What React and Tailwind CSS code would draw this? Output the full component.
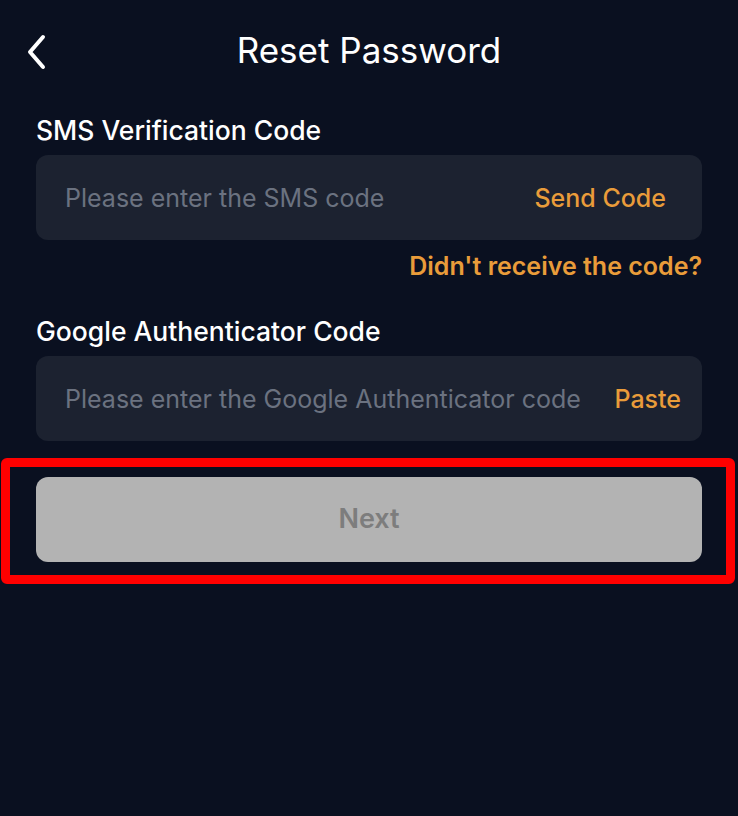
import React, { useState } from "react";

function ChevronLeft() {
  return (
    <svg width="22" height="36" viewBox="0 0 22 36" fill="none" aria-hidden>
      <path
        d="M18 3 L5 18 L18 33"
        stroke="white"
        strokeWidth="4"
        strokeLinecap="round"
        strokeLinejoin="round"
      />
    </svg>
  );
}

function Field({ label, placeholder, action, value, onChange, tight }) {
  return (
    <div>
      <label className="block text-[26.5px] font-medium text-white leading-[28px]">{label}</label>
      <div
        className={`mt-[11px] h-[85px] rounded-[12px] bg-[#1c2230] flex items-center pl-[29px] gap-4 ${
          tight ? "pr-[21px]" : "pr-[36px]"
        }`}
      >
        <input
          value={value}
          onChange={(e) => onChange(e.target.value)}
          placeholder={placeholder}
          className="flex-1 min-w-0 bg-transparent text-[25px] leading-[30px] text-white placeholder:text-[#6b7280] outline-none"
        />
        <button type="button" className="text-[25px] leading-[30px] font-medium text-[#e99c3a] whitespace-nowrap">
          {action}
        </button>
      </div>
    </div>
  );
}

export default function App() {
  const [sms, setSms] = useState("");
  const [gauth, setGauth] = useState("");

  return (
    <div
      className="min-h-screen bg-[#0a1020] px-[36px]"
      style={{ fontFamily: "Inter, 'Noto Sans', sans-serif" }}
    >
      <header className="relative h-[102px] flex items-center justify-center">
        <button type="button" className="absolute left-[-11px] top-[34px]">
          <ChevronLeft />
        </button>
        <h1 className="text-[35px] leading-[42px] font-normal text-white -mt-[2px]">Reset Password</h1>
      </header>

      <div className="pt-[14px]">
        <Field
          label="SMS Verification Code"
          placeholder="Please enter the SMS code"
          action="Send Code"
          value={sms}
          onChange={setSms}
        />
        <div className="mt-[12px] flex justify-end">
          <button type="button" className="text-[25px] font-semibold text-[#e99c3a] leading-[28px]">
            Didn't receive the code?
          </button>
        </div>
      </div>

      <div className="mt-[37px]">
        <Field
          label="Google Authenticator Code"
          placeholder="Please enter the Google Authenticator code"
          action="Paste"
          value={gauth}
          onChange={setGauth}
          tight
        />
      </div>

      <div className="relative mt-[36px]">
        <button
          type="button"
          disabled
          className="w-full h-[85px] rounded-[12px] bg-[#b3b3b3] text-[27px] font-semibold text-[#7d7d7d]"
        >
          Next
        </button>
        <div className="pointer-events-none absolute left-[-35px] right-[-33px] top-[-19px] bottom-[-22px] border-[9px] border-[#ff0000] rounded-[6px]" />
      </div>
    </div>
  );
}
